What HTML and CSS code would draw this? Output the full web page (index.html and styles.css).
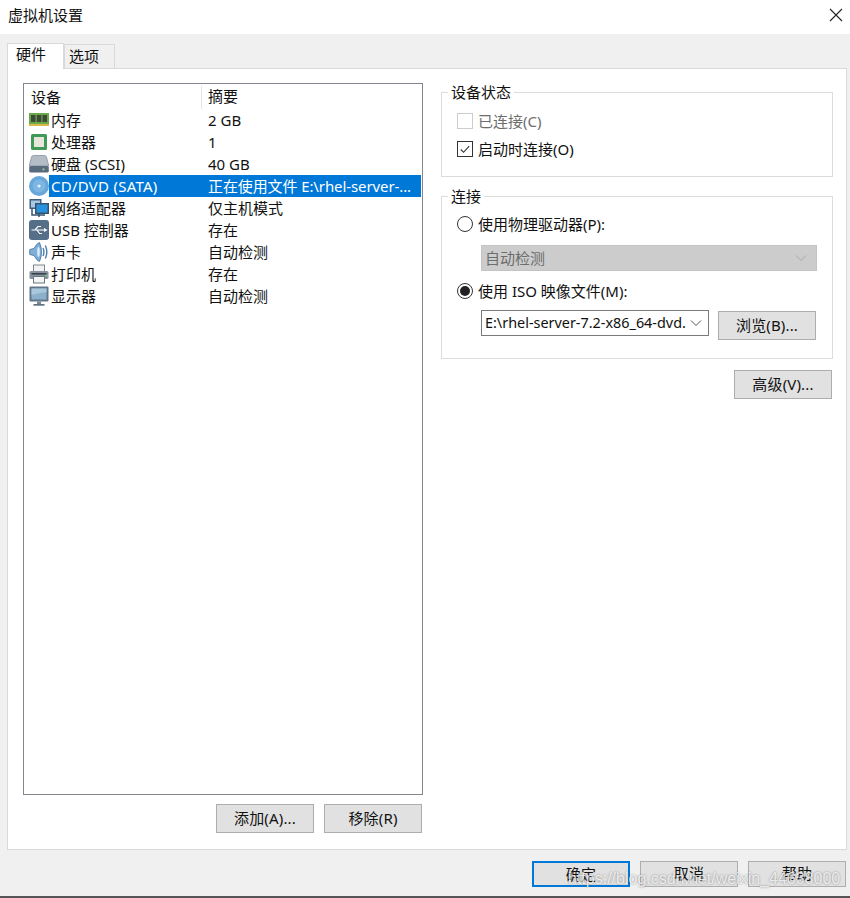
FILE: index.html
```html
<!DOCTYPE html>
<html lang="zh-CN">
<head>
<meta charset="utf-8">
<title>虚拟机设置</title>
<link rel="stylesheet" href="styles.css">
</head>
<body>
<div class="window">
  <header class="titlebar">
    <span class="title">虚拟机设置</span>
    <svg class="close" width="14" height="14" viewBox="0 0 14 14"><path d="M1 1L13 13M13 1L1 13" stroke="#222" stroke-width="1.1" fill="none"/></svg>
  </header>
  <div class="dialog">
    <div class="tabs">
      <div class="tab active">硬件</div>
      <div class="tab">选项</div>
    </div>
    <main class="panel">
      <section class="left">
        <div class="list">
          <div class="row head"><span class="cell-name">设备</span><span class="cell-sum">摘要</span></div>
          <div class="row">
            <svg class="ico" viewBox="0 0 20 20"><rect x="0" y="3" width="20" height="11" fill="#6aa84a"/><rect x="2" y="5" width="4.500" height="7" fill="#3d4a3a"/><rect x="7.800" y="5" width="4.500" height="7" fill="#3d4a3a"/><rect x="13.500" y="5" width="4.500" height="7" fill="#3d4a3a"/><rect x="0" y="14" width="20" height="2" fill="#d9b84a"/></svg>
            <span class="cell-name">内存</span><span class="cell-sum">2 GB</span>
          </div>
          <div class="row">
            <svg class="ico" viewBox="0 0 20 20"><rect x="2" y="2" width="16" height="16" rx="1.500" fill="#3f9a58"/><rect x="5" y="5" width="10" height="10" fill="#e6e6dc"/></svg>
            <span class="cell-name">处理器</span><span class="cell-sum">1</span>
          </div>
          <div class="row">
            <svg class="ico" viewBox="0 0 20 20"><path d="M4.500 1.500H15.500Q17 1.500 17.500 3L19.800 12H.2L2.500 3Q3 1.500 4.500 1.500Z" fill="#b4bcc6" stroke="#7a8796" stroke-width=".7"/><rect x="0.2" y="12" width="19.600" height="6.500" rx="1.500" fill="#586a7d"/><rect x="13.500" y="14.500" width="2" height="1.800" fill="#8fd08a"/></svg>
            <span class="cell-name">硬盘 (SCSI)</span><span class="cell-sum">40 GB</span>
          </div>
          <div class="row selected">
            <svg class="ico" viewBox="0 0 20 20"><circle cx="10" cy="10" r="10" fill="#69a7d8"/><circle cx="10" cy="10" r="6.500" fill="#7db6e2"/><circle cx="10" cy="10" r="1.600" fill="#e4f1fa"/></svg>
            <span class="cell-name">CD/DVD (SATA)</span><span class="cell-sum">正在使用文件 E:\rhel-server-...</span>
          </div>
          <div class="row">
            <svg class="ico" viewBox="0 0 20 20"><rect x="0.5" y="1" width="12" height="10" fill="#3e5f80"/><rect x="2" y="2.500" width="9" height="7" fill="#a9c8e0"/><rect x="6" y="5" width="14" height="11" fill="#34536f"/><rect x="7.500" y="6.500" width="11" height="8" fill="#2a93e0"/><path d="M3 11V17H16M10 16V19" stroke="#34536f" stroke-width="1.500" fill="none"/></svg>
            <span class="cell-name">网络适配器</span><span class="cell-sum">仅主机模式</span>
          </div>
          <div class="row">
            <svg class="ico" viewBox="0 0 20 20"><rect x="0" y="0" width="20" height="20" rx="3" fill="#566f88"/><path d="M2.500 10H16M6 10L9 6.500H12M8 10L10.500 13.500H13" stroke="#fff" stroke-width="1.200" fill="none"/><path d="M15 8L18.500 10L15 12Z" fill="#fff"/></svg>
            <span class="cell-name">USB 控制器</span><span class="cell-sum">存在</span>
          </div>
          <div class="row">
            <svg class="ico" viewBox="0 0 20 20"><path d="M.8 7.500Q.5 10 .8 12.500L5 13.500Q8 19 10.500 19.500Q12.500 15 12.500 10Q12.500 5 10.500 .5Q8 1 5 6.500Z" fill="#7fb0da" stroke="#3e6c98" stroke-width=".8"/><ellipse cx="9.500" cy="10" rx="1.300" ry="5" fill="#dcebf7"/><path d="M14 6Q15.800 10 14 14M16.300 3.500Q19.300 10 16.300 16.500" stroke="#4a7dab" stroke-width="1.400" fill="none"/></svg>
            <span class="cell-name">声卡</span><span class="cell-sum">自动检测</span>
          </div>
          <div class="row">
            <svg class="ico" viewBox="0 0 20 20"><rect x="4.500" y="1" width="11" height="7" fill="#f2f2f2" stroke="#7c8794"/><rect x=".5" y="7" width="19" height="8" rx="1.500" fill="#87929e"/><rect x="4.500" y="12.500" width="11" height="6.500" fill="#f4f4f4" stroke="#6c7784"/><rect x="2.500" y="9" width="15" height="1.600" fill="#39424d"/><rect x="16.500" y="10.800" width="2" height="1.500" fill="#6fd06f"/></svg>
            <span class="cell-name">打印机</span><span class="cell-sum">存在</span>
          </div>
          <div class="row">
            <svg class="ico" viewBox="0 0 20 20"><rect x=".5" y=".5" width="19" height="15" rx="1" fill="#62768a"/><rect x="2.500" y="2.500" width="15" height="11" fill="#8cb0cb"/><path d="M2.500 2.500H17.500V6Q10 7 2.500 9Z" fill="#a9c7dc"/><rect x="8" y="15.500" width="4" height="2.500" fill="#7b8894"/><rect x="4.500" y="18" width="11" height="1.700" fill="#5d7184"/></svg>
            <span class="cell-name">显示器</span><span class="cell-sum">自动检测</span>
          </div>
        </div>
        <div class="list-actions">
          <button class="btn">添加(A)...</button>
          <button class="btn">移除(R)</button>
        </div>
      </section>
      <section class="right">
        <fieldset class="group status">
          <legend>设备状态</legend>
          <div class="option disabled"><span class="check"></span>已连接(C)</div>
          <div class="option"><span class="check on"><svg width="15" height="15" viewBox="0 0 15 15"><path d="M3 7.500L6 10.500L12 4" stroke="#333" stroke-width="1.200" fill="none"/></svg></span>启动时连接(O)</div>
        </fieldset>
        <fieldset class="group connect">
          <legend>连接</legend>
          <div class="option"><span class="radio"></span>使用物理驱动器(P):</div>
          <div class="select off">自动检测<svg class="chev" width="12" height="8" viewBox="0 0 12 8"><path d="M1 1.500L6 6.500L11 1.500" stroke="#a8a8a8" fill="none"/></svg></div>
          <div class="option second"><span class="radio on"></span>使用 ISO 映像文件(M):</div>
          <div class="iso-row">
            <div class="select combo">E:\rhel-server-7.2-x86_64-dvd.<svg class="chev" width="12" height="8" viewBox="0 0 12 8"><path d="M1 1.500L6 6.500L11 1.500" stroke="#555" fill="none"/></svg></div>
            <button class="btn">浏览(B)...</button>
          </div>
        </fieldset>
        <div class="adv"><button class="btn">高级(V)...</button></div>
      </section>
    </main>
    <footer class="footer">
      <button class="btn default">确定</button>
      <button class="btn">取消</button>
      <button class="btn">帮助</button>
    </footer>
  </div>
  <div class="watermark">https://blog.csdn.net/weixin_44638000</div>
</div>
</body>
</html>
```
FILE: styles.css
```css
* { box-sizing: border-box; }
html, body { margin: 0; padding: 0; }
body { font-family: "Noto Sans", "Noto Sans CJK SC", sans-serif; font-size: 15px; color: #111; background: #fff; }
.window { position: relative; width: 850px; height: 898px; display: flex; flex-direction: column; border-bottom: 2px solid #555; overflow: hidden; }
.titlebar { height: 34px; flex: none; background: #fff; display: flex; align-items: center; justify-content: space-between; padding: 0 7px 0 8px; }
.title { font-size: 15px; line-height: 20px; margin-top: -4px; }
.close { margin-top: -4px; }
.dialog { flex: 1; background: #f0f0f0; padding: 9px 3px 0 7px; display: flex; flex-direction: column; }
.tabs { display: flex; align-items: flex-end; height: 26px; position: relative; z-index: 1; }
.tab { width: 51px; height: 24px; border: 1px solid #d9d9d9; border-bottom: 0; padding-left: 4px; line-height: 22px; background: #f0f0f0; margin-bottom: 1px; }
.tab.active { width: 57px; height: 26px; background: #fff; margin-bottom: 0; padding-left: 8px; line-height: 21px; }
.panel { height: 782px; margin-top: -1px; background: #fff; border: 1px solid #d9d9d9; padding: 14px 14px 0 15px; display: grid; grid-template-columns: 400px 392px; column-gap: 18px; }
.list { height: 712px; border: 1px solid #82878f; padding-top: 1px; background: #fff; }
.row { display: flex; align-items: center; height: 22px; line-height: 22px; padding-left: 5px; white-space: nowrap; width: 397px; }
.row.head { height: 24px; padding-left: 5px; line-height: 21px; }
.head .cell-name { width: 172px; }
.head .cell-sum { border-left: 1px solid #e5e5e5; height: 23px; padding-left: 6px; width: 220px; }
.ico { width: 20px; height: 20px; flex: none; }
.cell-name { width: 152px; padding-left: 2px; flex: none; }
.cell-sum { padding-left: 7px; flex: 1; overflow: hidden; }
.selected .cell-name, .selected .cell-sum { background: #0078d7; color: #fff; height: 22px; }
.selected .cell-name { letter-spacing: .25px; }
.selected .cell-sum { letter-spacing: -.1px; }
.list-actions { display: flex; justify-content: flex-end; gap: 10px; margin-top: 9px; padding-right: 1px; }
.btn { width: 98px; height: 29px; background: #e1e1e1; border: 1px solid #adadad; font: inherit; color: #111; padding: 0 0 3px; letter-spacing: .15px; cursor: default; }
.group { border: 1px solid #dcdcdc; margin: 0; padding: 0 0 0 15px; min-width: 0; }
.group legend { padding: 0 3px; margin-left: -9px; line-height: 20px; }
.status { height: 95px; margin-top: -1px; }
.connect { height: 173px; margin-top: 9px; }
.option { display: flex; align-items: center; gap: 5px; height: 22px; margin-top: 7px; line-height: 22px; }
.status .option { margin-top: 6px; }
.status .option:first-of-type { margin-top: 8px; }
.connect .option:first-of-type { margin-top: 7px; }
.disabled { color: #6d6d6d; }
.check { width: 16px; height: 16px; border: 1px solid #333; background: #fff; flex: none; display: flex; }
.disabled .check { border-color: #ccc; }
.radio { width: 16px; height: 16px; border: 1px solid #333; border-radius: 50%; background: #fff; flex: none; display: flex; align-items: center; justify-content: center; }
.radio.on::after { content: ""; width: 10px; height: 10px; border-radius: 50%; background: #222; }
.select { width: 336px; height: 26px; margin: 10px 0 0 24px; display: flex; align-items: center; justify-content: space-between; padding: 0 9px 0 3px; line-height: 24px; }
.select.off { background: #cccccc; color: #6d6d6d; border: 1px solid #c4c4c4; }
.second { margin-top: 9px; }
.iso-row { display: flex; align-items: flex-start; margin-top: 8px; gap: 9px; }
.combo { width: 228px; margin: 0 0 0 24px; background: #fff; border: 1px solid #7a7a7a; white-space: nowrap; overflow: hidden; font-size: 14.4px; padding-right: 6px; }
.iso-row .btn { margin-top: 1px; }
.adv { display: flex; justify-content: flex-end; padding-right: 1px; margin-top: 11px; }
.footer { display: flex; justify-content: flex-end; gap: 10px; padding: 11px 1px 0 0; }
.footer .btn { height: 26px; }
.btn.default { border: 2px solid #0078d7; }
.watermark { position: absolute; left: 568px; top: 867px; font-family: "Liberation Sans", sans-serif; font-size: 16px; line-height: 24px; color: rgba(255,255,255,.8); text-shadow: 0 0 2px rgba(60,60,60,.6); white-space: nowrap; }
```
